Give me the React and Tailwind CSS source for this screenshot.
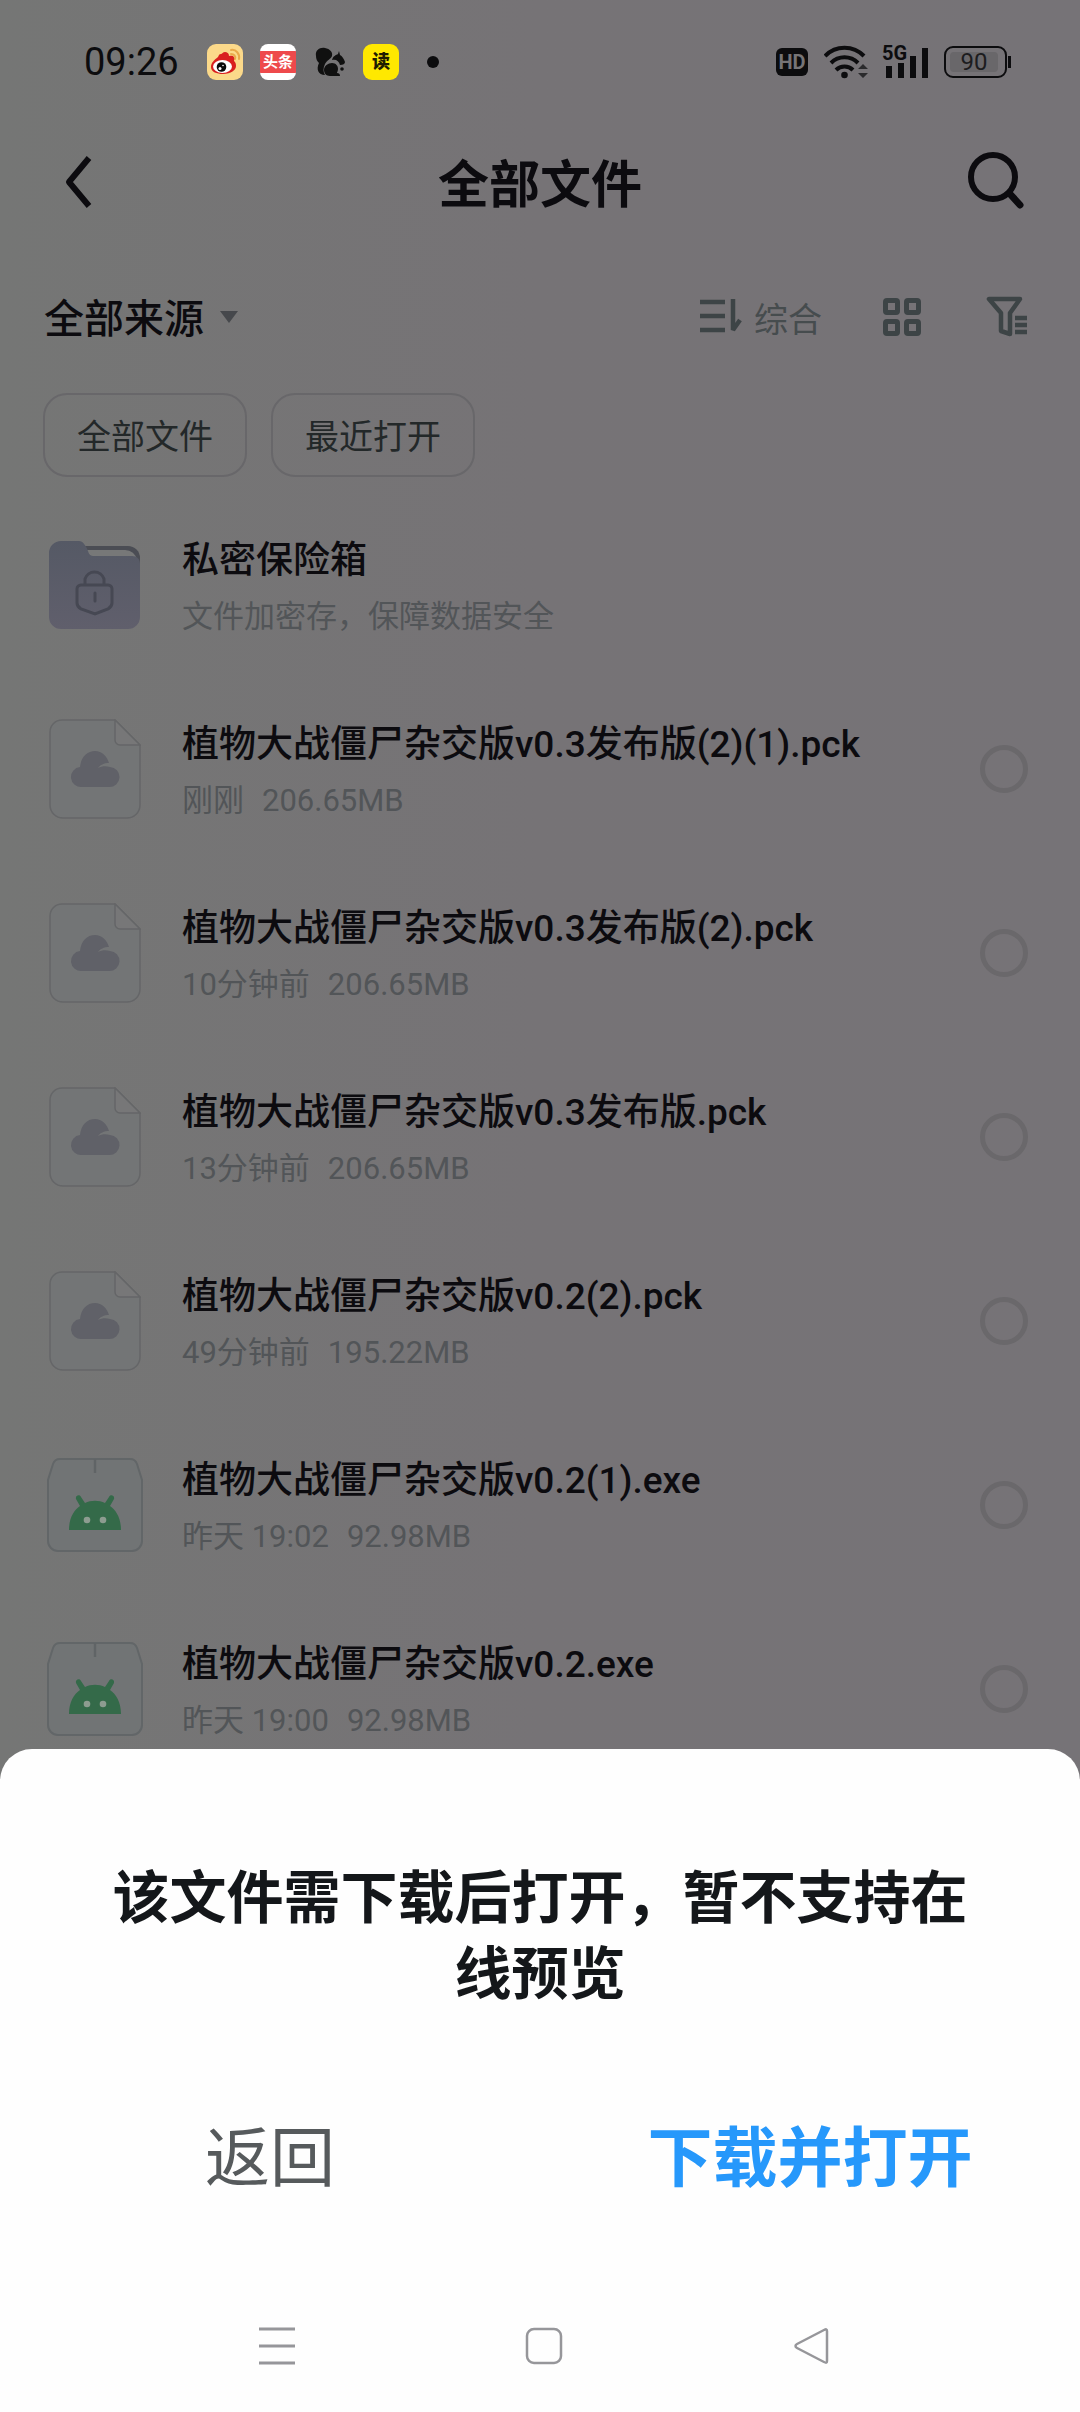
import React from 'react';

const files = [
  { id: 1, name: '植物大战僵尸杂交版v0.3发布版(2)(1).pck', time: '刚刚', size: '206.65MB', type: 'pck' },
  { id: 2, name: '植物大战僵尸杂交版v0.3发布版(2).pck', time: '10分钟前', size: '206.65MB', type: 'pck' },
  { id: 3, name: '植物大战僵尸杂交版v0.3发布版.pck', time: '13分钟前', size: '206.65MB', type: 'pck' },
  { id: 4, name: '植物大战僵尸杂交版v0.2(2).pck', time: '49分钟前', size: '195.22MB', type: 'pck' },
  { id: 5, name: '植物大战僵尸杂交版v0.2(1).exe', time: '昨天 19:02', size: '92.98MB', type: 'exe' },
  { id: 6, name: '植物大战僵尸杂交版v0.2.exe', time: '昨天 19:00', size: '92.98MB', type: 'exe' },
];

const WeiboIcon = () => (
  <svg width="36" height="36" viewBox="0 0 36 36">
    <rect width="36" height="36" rx="9" fill="#fbd98a" />
    <path d="M24 6c5-1 9 4 8 9M24 10c3 0 5 2 4 5" fill="none" stroke="#e9a94a" strokeWidth="2" strokeLinecap="round" />
    <path d="M18 8c-2 0-3 2-4 2-2 0-2 1-3 3-4 3-7 6-7 10 0 5 6 7 12 7 8 0 13-4 13-8 0-3-1-4-2-5 1-5-1-6-5-5 0-3-2-4-4-4z" fill="#d9201f" />
    <ellipse cx="15.500" cy="22.500" rx="9.500" ry="6.500" fill="#fff" />
    <circle cx="14.500" cy="23" r="4.800" fill="#0a0a0a" />
    <circle cx="13" cy="24.500" r="1.500" fill="#fff" />
    <circle cx="16" cy="21.500" r="0.800" fill="#fff" />
  </svg>
);

const SquirrelIcon = () => (
  <svg width="30" height="30" viewBox="0 0 30 30" fill="#101010">
    <path d="M1 9C0 3 5 0 10 1c5 1 8 4 7 8-1 3-5 4-7 8-2 4-2 8 0 11-7 0-9-6-6-12-2-2-3-4-3-7z" />
    <path d="M24 4l1 4c2 1 4 4 5 7 0 2-2 3-5 3-1-4-4-6-8-5 1-4 4-5 6-6z" />
    <path d="M17 16c4 0 6 3 6 6 0 2-1 3-1 4 2 0 3 1 3 3H15c-4 0-6-3-6-6 0-4 4-7 8-7z" />
    <circle cx="27" cy="22" r="1.800" />
  </svg>
);

const StatusBar = () => (
  <div className="flex h-[124px] items-center justify-between pl-[84px] pr-[69px] text-[#0c0c0e]">
    <div className="flex items-center">
      <span className="w-[123px] text-[38px] leading-none">09:26</span>
      <WeiboIcon />
      <div className="ml-[17px] flex size-9 items-center overflow-hidden rounded-lg bg-white">
        <div className="w-full bg-[#ee4a4c] text-center text-[15px] font-bold leading-[22px] text-white">头条</div>
      </div>
      <div className="ml-[19px]">
        <SquirrelIcon />
      </div>
      <div className="ml-[18px] size-9 rounded-[9px] bg-[#ffe800] text-center text-[18px] font-black leading-9 text-[#1f1c00]">读</div>
      <div className="ml-7 size-3 rounded-full bg-[#0c0c0e]" />
    </div>

    <div className="flex items-center">
      <div className="h-7 w-8 rounded-md bg-[#0c0c0e] text-center text-[20px] font-bold leading-7 text-[#767476]">HD</div>
      <svg className="ml-4" width="46" height="36" viewBox="0 0 46 36">
        <g fill="none" stroke="#0c0c0e" strokeWidth="4">
          <path d="M1 12a27 27 0 0 1 39 0" />
          <path d="M7 19a19 19 0 0 1 27 0" />
          <path d="M12 26a12 12 0 0 1 17 0" />
        </g>
        <circle cx="20.500" cy="31" r="3.300" fill="#0c0c0e" />
        <path d="M34 25l5-5 5 5zM34 29l5 5 5-5z" fill="#2a2a2c" />
      </svg>
      <svg className="ml-3" width="48" height="52" viewBox="0 -8 48 52" fill="#0c0c0e">
        <text x="0" y="16" fontSize="20" fontWeight="700" fontFamily="Roboto">5G</text>
        <rect x="4" y="22" width="6" height="12" />
        <rect x="16" y="19" width="6" height="15" />
        <rect x="28" y="12" width="6" height="22" />
        <rect x="40" y="4" width="6" height="30" />
      </svg>
      <div className="ml-[14px] flex items-center gap-px">
        <div className="flex h-8 w-[63px] rounded-[9px] border-2 border-[#0c0c0e] p-1">
          <span className="w-12 rounded-sm bg-[#69676a] text-center text-[24px] leading-[20px] text-[#1c1c1e]">90</span>
        </div>
        <div className="h-3 w-[3px] bg-[#0c0c0e]" />
      </div>
    </div>
  </div>
);

const FolderIcon = () => (
  <svg width="92" height="88" viewBox="0 0 92 88">
    <defs>
      <linearGradient id="folder" x1="0" y1="0" x2="0" y2="1">
        <stop offset="0" stopColor="#555965" />
        <stop offset="1" stopColor="#605f6c" />
      </linearGradient>
    </defs>
    <path d="M36 5h43a12 12 0 0 1 12 12v10H36z" fill="#4b4d54" />
    <path d="M36 9h40a12 12 0 0 1 12 10v10H36z" fill="#777878" />
    <path d="M12 0h18c4 0 7 5 9 10 1 4 3 5 6 5h38c5 0 8 3 8 8v53a12 12 0 0 1-12 12H12A12 12 0 0 1 0 76V12A12 12 0 0 1 12 0z" fill="url(#folder)" />
    <path d="M36 43v-5a10 10 0 0 1 19 0v5M32 44h27a4 4 0 0 1 4 4v14c0 3-1 4-4 6l-13 5-14-5c-3-2-4-3-4-6V48a4 4 0 0 1 4-4zM46 52v8" fill="none" stroke="#464853" strokeWidth="3" strokeLinecap="round" />
  </svg>
);

const DocIcon = () => (
  <svg width="92" height="100" viewBox="0 0 92 100">
    <path d="M13 1h53l25 25v60a13 13 0 0 1-13 13H14A13 13 0 0 1 1 86V13A12 12 0 0 1 13 1z" fill="#737576" stroke="#656668" strokeWidth="1.500" />
    <path d="M66 1v20a5 5 0 0 0 5 5h20z" fill="#777778" stroke="#656668" strokeWidth="1.500" />
    <path d="M33 68a10 10 0 0 1-2-20c1-10 7-16 15-16 7 0 12 5 14 12-5 0-9 2-11 5 4-2 8-2 12-1a10 10 0 0 1-1 20z" fill="#606168" />
  </svg>
);

const ApkIcon = () => (
  <svg width="96" height="94" viewBox="0 0 96 94">
    <path d="M13 1h70c4 0 6 2 7 5l5 16v61a10 10 0 0 1-10 10H11A10 10 0 0 1 1 83V22L6 6c1-3 3-5 7-5z" fill="#717475" stroke="#626668" strokeWidth="2" />
    <path d="M48 1v14" stroke="#606466" strokeWidth="2.500" />
    <path d="M22 72c0-12 5-20 11-24l-4-7c-1-4 4-5 5-2l4 6c6-3 14-3 20 0l4-6c1-3 6-2 5 2l-4 7c6 4 11 12 11 24z" fill="#346a49" />
    <circle cx="40" cy="62" r="3.300" fill="#8d9c90" />
    <circle cx="56" cy="62" r="3.300" fill="#8d9c90" />
  </svg>
);

const FileRow = ({ file }) => (
  <li className="flex h-[184px] items-center pl-[47px] pr-[52px]">
    <div className="flex w-24 shrink-0 justify-center">
      {file.type === 'exe' ? <ApkIcon /> : <DocIcon />}
    </div>
    <div className="ml-[39px] flex-1 pt-2">
      <label htmlFor={`file-${file.id}`} className="block text-[37px] font-medium leading-[56px] text-[#0c0b0f]">
        {file.name}
      </label>
      <p className="flex gap-[18px] text-[31px] leading-[56px] text-[#525558]">
        <span>{file.time}</span>
        <span>{file.size}</span>
      </p>
    </div>
    <input
      id={`file-${file.id}`}
      type="checkbox"
      className="size-12 appearance-none rounded-full border-[5px] border-[#6a686b]"
    />
  </li>
);

const BottomSheet = () => (
  <section role="dialog" aria-labelledby="sheet-title" className="relative -mt-8 flex flex-1 flex-col rounded-t-[32px] bg-[#fefefe]">
    <h2 id="sheet-title" className="px-[100px] pt-[112px] text-center text-[57px] font-bold leading-[76px] text-[#14171a]">
      该文件需下载后打开，暂不支持在线预览
    </h2>
    <div className="mt-24 grid grid-cols-2 text-[65px] leading-[100px]">
      <button className="text-[#565a5c]">返回</button>
      <button className="font-bold text-[#2698fb]">下载并打开</button>
    </div>
    <nav className="mt-auto grid h-[132px] grid-cols-3 items-center justify-items-center pl-[144px] pr-[136px]">
      <button aria-label="最近任务">
        <svg width="36" height="38" viewBox="0 0 36 38" stroke="#96969a" strokeWidth="3">
          <path d="M0 2h36M0 19h36M0 36h36" />
        </svg>
      </button>
      <button aria-label="主屏幕">
        <svg width="38" height="38" viewBox="0 0 38 38" fill="none" stroke="#96969a" strokeWidth="2.500">
          <rect x="2" y="2" width="34" height="34" rx="7" />
        </svg>
      </button>
      <button aria-label="返回上一页">
        <svg width="36" height="38" viewBox="0 0 36 38" fill="none" stroke="#96969a" strokeWidth="2.500" strokeLinejoin="round">
          <path d="M34 4v30c0 2-1 2-3 1L4 21c-2-1-2-3 0-4L31 3c2-1 3-1 3 1z" />
        </svg>
      </button>
    </nav>
  </section>
);

export default function App() {
  return (
    <div className="flex min-h-screen flex-col bg-linear-to-r from-[#757675] via-[#767376] to-[#767377] font-[Roboto,'Noto_Sans_CJK_SC',sans-serif]">
      <StatusBar />

      <header className="grid h-[116px] grid-cols-[1fr_auto_1fr] items-center px-14 text-[#0c0b0f]">
        <button aria-label="返回">
          <svg width="40" height="56" viewBox="0 0 40 56" fill="none" stroke="currentColor" strokeWidth="6">
            <path d="M33 4L13 28l20 24" strokeLinejoin="round" />
          </svg>
        </button>
        <h1 className="pt-2 text-[51px] font-bold leading-[60px]">全部文件</h1>
        <button aria-label="搜索" className="justify-self-end">
          <svg width="60" height="60" viewBox="0 0 60 60" fill="none" stroke="currentColor" strokeWidth="6">
            <circle cx="29" cy="25" r="22" />
            <path d="M46 42l10 11" strokeWidth="7" strokeLinecap="round" />
          </svg>
        </button>
      </header>

      <div className="flex h-[153px] items-center justify-between pl-11 pr-[52px] text-[#3d4446]">
        <button className="flex items-center gap-4 text-[40px] font-medium leading-[60px] text-[#0c0b0f]">
          <span className="pt-1.5">全部来源</span>
          <svg width="18" height="12" viewBox="0 0 18 12" fill="#46484c">
            <path d="M0 0h18l-9 12z" />
          </svg>
        </button>
        <div className="flex items-center">
          <button className="flex items-center gap-3 text-[34px] leading-[50px] text-[#464c4e]">
            <svg width="42" height="36" viewBox="0 0 42 36" fill="none" stroke="#3d4446" strokeWidth="4.500">
              <path d="M0 3h25M0 17h25M0 31h25" />
              <path d="M33 0v31l7-10" strokeWidth="4.500" strokeLinejoin="bevel" />
            </svg>
            <span className="pt-1.5">综合</span>
          </button>
          <button aria-label="网格视图" className="ml-[60px]">
            <svg width="40" height="40" viewBox="0 0 40 40" fill="none" stroke="currentColor" strokeWidth="5">
              <rect x="3.500" y="3.500" width="12" height="12" rx="1.500" />
              <rect x="24.500" y="3.500" width="12" height="12" rx="1.500" />
              <rect x="3.500" y="24.500" width="12" height="12" rx="1.500" />
              <rect x="24.500" y="24.500" width="12" height="12" rx="1.500" />
            </svg>
          </button>
          <button aria-label="筛选" className="ml-16">
            <svg width="42" height="42" viewBox="0 0 42 42" fill="none" stroke="currentColor" strokeWidth="4.500">
              <path d="M3 3h31L24 17v21l-9-3V17z" strokeLinejoin="round" />
              <path d="M29 22h12M29 29h12M29 36h12" />
            </svg>
          </button>
        </div>
      </div>

      <div className="flex gap-6 px-[43px] text-[34px] text-[#232829]">
        <button className="h-[84px] w-[204px] rounded-3xl border-2 border-[#68676a] pt-1">全部文件</button>
        <button className="h-[84px] w-[204px] rounded-3xl border-2 border-[#68676a] pt-1">最近打开</button>
      </div>

      <ul className="mt-4">
        <li className="flex h-[184px] items-center pl-[47px] pr-[52px]">
          <div className="flex w-24 shrink-0 justify-center">
            <FolderIcon />
          </div>
          <div className="ml-[39px] pt-2">
            <p className="text-[37px] font-medium leading-[56px] text-[#0c0b0f]">私密保险箱</p>
            <p className="text-[31px] leading-[56px] text-[#525558]">文件加密存，保障数据安全</p>
          </div>
        </li>
        {files.map((file) => (
          <FileRow key={file.id} file={file} />
        ))}
      </ul>

      <BottomSheet />
    </div>
  );
}
